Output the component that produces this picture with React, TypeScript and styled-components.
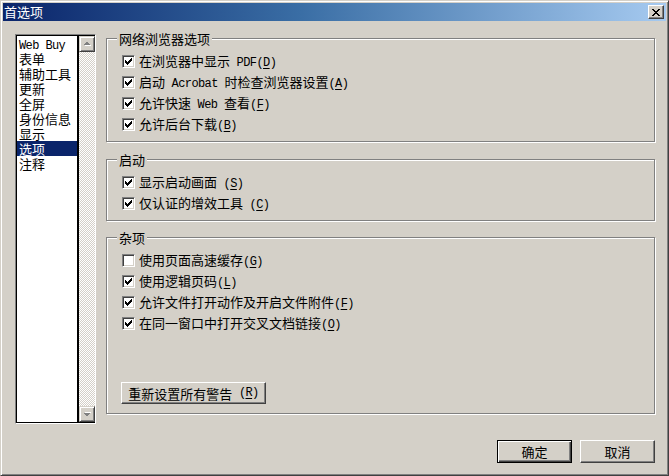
import React from 'react'
import styled, { createGlobalStyle } from 'styled-components'

const face = '#d4d0c8'
const cjk = `"Noto Sans CJK SC", "DejaVu Sans", sans-serif`

const GlobalStyle = createGlobalStyle`
  html, body {
    margin: 0;
    padding: 0;
    background: ${face};
  }
  body {
    font-family: ${cjk};
    font-size: 13px;
    color: #000;
  }
  * {
    box-sizing: border-box;
  }
`

const Window = styled.div`
  width: 669px;
  height: 476px;
  display: flex;
  flex-direction: column;
  padding: 2px;
  background: ${face};
  border: 1px solid;
  border-color: ${face} #404040 #404040 ${face};
  box-shadow: inset 1px 1px 0 #fff, inset -1px -1px 0 #808080;
`

const TitleBar = styled.div`
  height: 18px;
  flex: none;
  display: flex;
  align-items: center;
  justify-content: space-between;
  padding: 0 2px 0 1px;
  background: linear-gradient(90deg, #0a246a 0%, #3a6ea5 45%, #a6caf0 100%);
`

const Title = styled.div`
  color: #fff;
  font-size: 13px;
  line-height: 18px;
`

const CloseButton = styled.button`
  width: 16px;
  height: 14px;
  padding: 0;
  display: flex;
  align-items: center;
  justify-content: center;
  background: ${face};
  border: 1px solid;
  border-color: #fff #404040 #404040 #fff;
  box-shadow: inset -1px -1px 0 #808080;
`

const Body = styled.div`
  flex: 1;
  display: flex;
  flex-direction: column;
  padding: 13px 11px 10px 12px;
`

const Main = styled.div`
  height: 390px;
  display: flex;
  gap: 10px;
`

const ListBox = styled.div`
  width: 81px;
  flex: none;
  display: flex;
  border: 1px solid;
  border-color: #808080 #fff #fff #808080;
`

const ListItems = styled.div`
  flex: 1;
  background: #fff;
  border: 1px solid #000;
  border-right-width: 2px;
  overflow: hidden;
`

const ListItem = styled.div<{ $selected?: boolean }>`
  height: 15px;
  line-height: 15px;
  padding-left: 2px;
  white-space: nowrap;
  font-size: 13px;
  background: ${(p) => (p.$selected ? '#0a246a' : 'transparent')};
  color: ${(p) => (p.$selected ? '#fff' : '#000')};
`

const ScrollBar = styled.div`
  width: 16px;
  flex: none;
  display: flex;
  flex-direction: column;
  border-bottom: 1px solid #000;
  border-top: 1px solid #000;
`

const ScrollButton = styled.div`
  width: 16px;
  height: 16px;
  flex: none;
  display: flex;
  align-items: center;
  justify-content: center;
  background: ${face};
  border: 1px solid;
  border-color: ${face} #404040 #404040 ${face};
  box-shadow: inset 1px 1px 0 #fff, inset -1px -1px 0 #808080;
`

const Track = styled.div`
  flex: 1;
  background-color: ${face};
  background-image: conic-gradient(#fff 25%, ${face} 0 50%, #fff 0 75%, ${face} 0);
  background-size: 2px 2px;
`

const RightCol = styled.div`
  flex: 1;
  display: flex;
  flex-direction: column;
  padding-bottom: 10px;
`

const GroupBox = styled.div<{ $gap: number; $grow?: boolean }>`
  position: relative;
  margin-top: ${(p) => p.$gap}px;
  flex: ${(p) => (p.$grow ? 1 : 'none')};
  display: flex;
  flex-direction: column;
  padding: 12px 10px 6px 15px;
  border: 1px solid #808080;
  box-shadow: 1px 1px 0 #fff, inset 1px 1px 0 #fff;
`

const Legend = styled.div`
  position: absolute;
  top: -9px;
  left: 10px;
  padding: 0 2px;
  background: ${face};
  font-size: 13px;
  line-height: 17px;
`

const Row = styled.div`
  height: 21px;
  display: flex;
  align-items: center;
  gap: 4px;
`

const Box = styled.span`
  width: 13px;
  height: 13px;
  flex: none;
  display: flex;
  align-items: center;
  justify-content: center;
  background: #fff;
  border: 1px solid;
  border-color: #808080 #fff #fff #808080;
  box-shadow: inset 1px 1px 0 #404040, inset -1px -1px 0 ${face};
`

const Label = styled.span`
  font-size: 13px;
  line-height: 15px;
  white-space: nowrap;
`

const Lat = styled.span`
  font-family: "Liberation Mono", "DejaVu Sans Mono", monospace;
  font-size: 12px;
  letter-spacing: -0.6px;
  white-space: pre;

  u {
    text-underline-offset: 2px;
  }
`

const RaisedButton = styled.button`
  font-family: ${cjk};
  font-size: 13px;
  color: #000;
  background: ${face};
  padding: 0;
  display: flex;
  align-items: center;
  justify-content: center;
  white-space: nowrap;
`

const ResetButton = styled(RaisedButton)`
  margin-top: auto;
  margin-bottom: 3px;
  margin-left: -1px;
  width: 145px;
  height: 22px;
  border: 1px solid;
  border-color: #fff #404040 #404040 #fff;
  box-shadow: inset -1px -1px 0 #808080;
`

const Footer = styled.div`
  margin-top: 16px;
  display: flex;
  justify-content: flex-end;
  gap: 8px;
`

const DialogButton = styled(RaisedButton)<{ $default?: boolean }>`
  width: 75px;
  height: 23px;
  border: 1px solid;
  border-color: ${(p) => (p.$default ? '#000' : '#fff #404040 #404040 #fff')};
  box-shadow: ${(p) =>
    p.$default
      ? 'inset 1px 1px 0 #fff, inset -1px -1px 0 #404040, inset -2px -2px 0 #808080'
      : 'inset -1px -1px 0 #808080'};
`

interface Option {
  label: React.ReactNode
  checked: boolean
}

interface Group {
  title: string
  options: Option[]
}

const categories = ['Web Buy', '表单', '辅助工具', '更新', '全屏', '身份信息', '显示', '选项', '注释']

const groups: Group[] = [
  {
    title: '网络浏览器选项',
    options: [
      { label: <>在浏览器中显示<Lat> PDF(<u>D</u>)</Lat></>, checked: true },
      { label: <>启动<Lat> Acrobat </Lat>时检查浏览器设置<Lat>(<u>A</u>)</Lat></>, checked: true },
      { label: <>允许快速<Lat> Web </Lat>查看<Lat>(<u>F</u>)</Lat></>, checked: true },
      { label: <>允许后台下载<Lat>(<u>B</u>)</Lat></>, checked: true },
    ],
  },
  {
    title: '启动',
    options: [
      { label: <>显示启动画面<Lat> (<u>S</u>)</Lat></>, checked: true },
      { label: <>仅认证的增效工具<Lat> (<u>C</u>)</Lat></>, checked: true },
    ],
  },
]

const misc: Option[] = [
  { label: <>使用页面高速缓存<Lat>(<u>G</u>)</Lat></>, checked: false },
  { label: <>使用逻辑页码<Lat>(<u>L</u>)</Lat></>, checked: true },
  { label: <>允许文件打开动作及开启文件附件<Lat>(<u>F</u>)</Lat></>, checked: true },
  { label: <>在同一窗口中打开交叉文档链接<Lat>(<u>O</u>)</Lat></>, checked: true },
]

const CheckMark = () => (
  <svg width="7" height="7" viewBox="0 0 7 7" shapeRendering="crispEdges">
    <rect x="6" y="0" width="1" height="3" fill="#000" />
    <rect x="5" y="1" width="1" height="3" fill="#000" />
    <rect x="4" y="2" width="1" height="3" fill="#000" />
    <rect x="3" y="3" width="1" height="3" fill="#000" />
    <rect x="2" y="4" width="1" height="3" fill="#000" />
    <rect x="1" y="3" width="1" height="3" fill="#000" />
    <rect x="0" y="2" width="1" height="3" fill="#000" />
  </svg>
)

const Arrow = ({ down }: { down?: boolean }) => (
  <svg width="8" height="6" viewBox="0 0 8 6" shapeRendering="crispEdges">
    <g transform={down ? 'translate(0 6) scale(1 -1)' : undefined}>
      <polygon points="1,5 4.5,1.5 8,5" fill="#fff" />
      <polygon points="0,4 3.5,0.5 7,4" fill="#808080" />
    </g>
  </svg>
)

const CheckRow = ({ option }: { option: Option }) => (
  <Row>
    <Box>{option.checked && <CheckMark />}</Box>
    <Label>{option.label}</Label>
  </Row>
)

export default function App() {
  return (
    <>
      <GlobalStyle />
      <Window>
        <TitleBar>
          <Title>首选项</Title>
          <CloseButton aria-label="关闭">
            <svg width="8" height="7" viewBox="0 0 8 7" shapeRendering="crispEdges">
              <path d="M0 0h2l2 2.5L6 0h2L5 3.5 8 7H6L4 4.5 2 7H0l3-3.5z" fill="#000" />
            </svg>
          </CloseButton>
        </TitleBar>

        <Body>
          <Main>
            <ListBox>
              <ListItems>
                {categories.map((c) => (
                  <ListItem key={c} $selected={c === '选项'}>
                    {/^[A-Za-z ]+$/.test(c) ? <Lat>{c}</Lat> : c}
                  </ListItem>
                ))}
              </ListItems>
              <ScrollBar>
                <ScrollButton><Arrow /></ScrollButton>
                <Track />
                <ScrollButton><Arrow down /></ScrollButton>
              </ScrollBar>
            </ListBox>

            <RightCol>
              {groups.map((g, i) => (
                <GroupBox key={g.title} $gap={i === 0 ? 4 : 17}>
                  <Legend>{g.title}</Legend>
                  {g.options.map((o, j) => (
                    <CheckRow key={j} option={o} />
                  ))}
                </GroupBox>
              ))}
              <GroupBox $gap={16} $grow>
                <Legend>杂项</Legend>
                {misc.map((o, j) => (
                  <CheckRow key={j} option={o} />
                ))}
                <ResetButton>重新设置所有警告<Lat> (<u>R</u>)</Lat></ResetButton>
              </GroupBox>
            </RightCol>
          </Main>

          <Footer>
            <DialogButton $default>确定</DialogButton>
            <DialogButton>取消</DialogButton>
          </Footer>
        </Body>
      </Window>
    </>
  )
}
